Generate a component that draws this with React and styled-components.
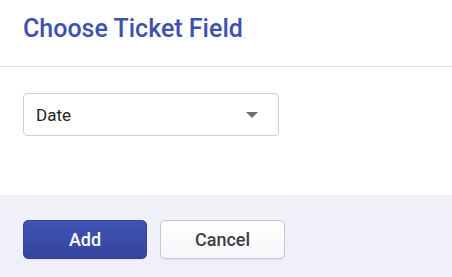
import React from 'react'
import styled, { createGlobalStyle } from 'styled-components'

const GlobalStyle = createGlobalStyle`
  html, body {
    margin: 0;
    padding: 0;
    background: #fff;
    font-family: Roboto, "Liberation Sans", sans-serif;
  }
`

const Dialog = styled.div`
  width: 452px;
  height: 277px;
  display: flex;
  flex-direction: column;
  background: #fff;
  overflow: hidden;
`

const Header = styled.div`
  height: 67px;
  box-sizing: border-box;
  border-bottom: 1px solid #dcdcdc;
  padding: 14px 23px 0;
`

const Title = styled.h2`
  margin: 0;
  font-size: 25px;
  font-weight: 500;
  color: #3f51b0;
  line-height: 30px;
`

const Body = styled.div`
  flex: 0 0 128px;
  box-sizing: border-box;
  padding: 26px 23px 0;
`

const Select = styled.div`
  width: 256px;
  height: 43px;
  box-sizing: border-box;
  border: 1px solid #cfcfcf;
  border-radius: 4px;
  display: flex;
  align-items: center;
  justify-content: space-between;
  padding: 0 20px 0 12px;
  font-size: 17px;
  color: #222;
`

const Caret = styled.span`
  width: 0;
  height: 0;
  border-left: 6px solid transparent;
  border-right: 6px solid transparent;
  border-top: 6px solid #6f6f6f;
`

const Footer = styled.div`
  flex: 1;
  background: #f0f1f8;
  display: flex;
  align-items: flex-start;
  gap: 13px;
  padding: 25px 23px 0;
`

const Button = styled.button`
  width: ${p => p.$width}px;
  height: 39px;
  border-radius: 5px;
  font-family: Roboto, "Liberation Sans", sans-serif;
  font-size: 18px;
  font-weight: 500;
  cursor: pointer;
  border: 1px solid ${p => (p.$primary ? '#33439a' : '#c6c7d1')};
  color: ${p => (p.$primary ? '#fff' : '#3b3d4a')};
  background: ${p => (p.$primary ? 'linear-gradient(#4153b3, #34449e)' : 'linear-gradient(#fff, #f7f7fa)')};
  box-shadow: 0 1px 1px rgba(0, 0, 0, 0.06);
`

export default function App() {
  return (
    <>
      <GlobalStyle />
      <Dialog>
        <Header>
          <Title>Choose Ticket Field</Title>
        </Header>
        <Body>
          <Select>
            <span>Date</span>
            <Caret />
          </Select>
        </Body>
        <Footer>
          <Button $primary $width={124}>Add</Button>
          <Button $width={125}>Cancel</Button>
        </Footer>
      </Dialog>
    </>
  )
}
